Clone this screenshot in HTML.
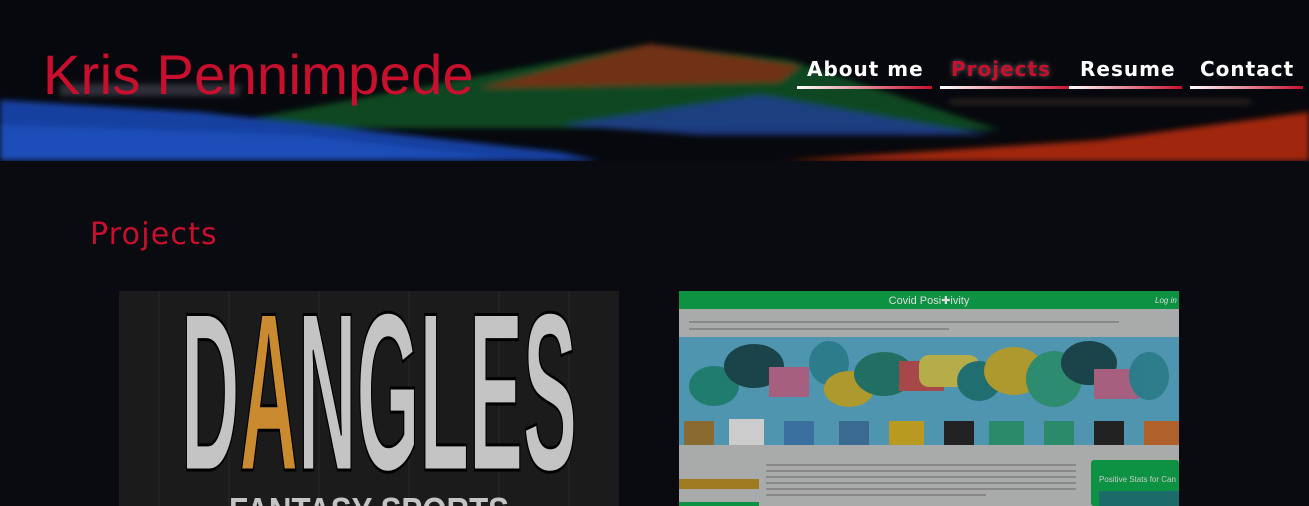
<!DOCTYPE html>
<html><head><meta charset="utf-8"><style>
*{margin:0;padding:0;box-sizing:border-box}
body{width:1309px;height:506px;overflow:hidden;background:#0a0b10;font-family:"DejaVu Sans","Liberation Sans",sans-serif;position:relative}
.hdr{position:absolute;left:0;top:0;width:1309px;height:161px;background:#07080d;overflow:hidden}
.name{position:absolute;left:43px;top:42px;font-family:"Liberation Sans",sans-serif;font-size:56px;color:#c8102e;letter-spacing:0.3px}
.nav a{position:absolute;top:57px;font-size:20px;font-weight:bold;color:#fff;letter-spacing:1px;text-decoration:none;white-space:nowrap}
.ul{position:absolute;top:86px;height:3px;background:linear-gradient(90deg,#fff,#c8102e)}
h2{position:absolute;left:90px;top:217px;font-size:30px;font-weight:normal;color:#c8102e;letter-spacing:1.2px}
</style></head><body>
<div class="hdr">
<svg width="1309" height="161" style="position:absolute;left:0;top:0">
<defs><filter id="b"><feGaussianBlur stdDeviation="3"/></filter></defs>
<g filter="url(#b)">
<polygon points="200,128 650,44 790,60 1000,130 700,128" fill="#156326" opacity="0.7"/>
<polygon points="480,88 650,44 800,66 780,82" fill="#8a2a18" opacity="0.8"/>
<polygon points="560,125 760,95 990,135 700,135" fill="#1f3e90" opacity="0.85"/>
<polygon points="0,100 200,112 560,152 600,161 0,161" fill="#163fa0"/>
<polygon points="0,125 300,135 500,158 0,158" fill="#2258c8" opacity="0.6"/>
<polygon points="780,161 1100,140 1309,112 1309,161" fill="#a0280e"/>
<rect x="950" y="100" width="300" height="4" fill="#5a5038" opacity="0.5"/>
<rect x="60" y="84" width="180" height="12" fill="#8a8aa0" opacity="0.3"/>
</g>
</svg>
<div class="name">Kris Pennimpede</div>
<div class="nav">
<a style="left:807px">About me</a>
<a style="left:951px;color:#c8102e;text-shadow:0 0 6px rgba(255,255,255,0.35)">Projects</a>
<a style="left:1080px">Resume</a>
<a style="left:1200px">Contact</a>
</div>
<div class="ul" style="left:797px;width:135px"></div>
<div class="ul" style="left:940px;width:132px"></div>
<div class="ul" style="left:1069px;width:113px"></div>
<div class="ul" style="left:1190px;width:113px"></div>
</div>
<h2>Projects</h2>
<svg width="500" height="215" style="position:absolute;left:119px;top:291px">
<rect width="500" height="215" fill="#1b1b1c"/>
<g stroke="#222223" stroke-width="2"><line x1="40" y1="0" x2="40" y2="215"/><line x1="110" y1="0" x2="110" y2="215"/><line x1="200" y1="0" x2="200" y2="215"/><line x1="290" y1="0" x2="290" y2="215"/><line x1="380" y1="0" x2="380" y2="215"/><line x1="450" y1="0" x2="450" y2="215"/></g>
<text x="62" y="179" font-family="Liberation Sans,sans-serif" font-weight="bold" font-size="226" textLength="396" lengthAdjust="spacingAndGlyphs" fill="#c4c4c4" stroke="#000" stroke-width="3">D<tspan fill="#c98a30">A</tspan>NGLES</text>
<text x="110" y="232" font-family="Liberation Sans,sans-serif" font-weight="bold" font-size="36" textLength="280" lengthAdjust="spacingAndGlyphs" fill="#c4c4c4">FANTASY SPORTS</text>
</svg>
<svg width="500" height="215" style="position:absolute;left:679px;top:291px">
<rect width="500" height="215" fill="#a9abab"/>
<rect width="500" height="18" fill="#0d9142"/>
<text x="250" y="13" text-anchor="middle" font-family="Liberation Sans,sans-serif" font-size="11" fill="#ddd">Covid Posi✚ivity</text>
<text x="476" y="12" font-family="Liberation Sans,sans-serif" font-size="8" font-style="italic" fill="#ddd">Log in</text>
<rect x="10" y="30" width="430" height="2" fill="#888"/><rect x="10" y="37" width="260" height="2" fill="#888"/>
<rect y="46" width="500" height="108" fill="#4f95b0"/>
<g opacity="0.9">
<ellipse cx="35" cy="95" rx="25" ry="20" fill="#1d7a6a"/><ellipse cx="75" cy="75" rx="30" ry="22" fill="#153b40"/>
<rect x="90" y="76" width="40" height="30" fill="#b05a7a"/><ellipse cx="150" cy="72" rx="20" ry="22" fill="#2a7a88"/>
<ellipse cx="170" cy="98" rx="25" ry="18" fill="#b89a20"/><ellipse cx="205" cy="83" rx="30" ry="22" fill="#1d6a5a"/>
<rect x="220" y="70" width="45" height="30" fill="#b04040"/><rect x="240" y="64" width="60" height="32" rx="10" fill="#c0b040"/>
<ellipse cx="300" cy="90" rx="22" ry="20" fill="#1d6a6a"/><ellipse cx="335" cy="80" rx="30" ry="24" fill="#b89a20"/>
<ellipse cx="375" cy="88" rx="28" ry="28" fill="#2a8a6a"/><ellipse cx="410" cy="72" rx="28" ry="22" fill="#153b40"/>
<rect x="415" y="78" width="45" height="30" fill="#b05a7a"/><ellipse cx="470" cy="85" rx="20" ry="24" fill="#2a7a88"/>
</g>
<g fill="#8a6a30"><rect x="5" y="130" width="30" height="24"/><rect x="50" y="128" width="35" height="26" fill="#ccc"/><rect x="105" y="130" width="30" height="24" fill="#3a70a0"/><rect x="160" y="130" width="30" height="24" fill="#3a6a90"/><rect x="210" y="130" width="35" height="24" fill="#b89a20"/><rect x="265" y="130" width="30" height="24" fill="#222"/><rect x="310" y="130" width="35" height="24" fill="#2a8a6a"/><rect x="365" y="130" width="30" height="24" fill="#2a8a6a"/><rect x="415" y="130" width="30" height="24" fill="#222"/><rect x="465" y="130" width="35" height="24" fill="#b0602a"/></g>
<rect x="0" y="188" width="80" height="10" fill="#a07a20"/><rect x="0" y="211" width="80" height="4" fill="#0d9142"/>
<g fill="#888"><rect x="87" y="173" width="310" height="2"/><rect x="87" y="179" width="310" height="2"/><rect x="87" y="185" width="310" height="2"/><rect x="87" y="191" width="310" height="2"/><rect x="87" y="197" width="310" height="2"/><rect x="87" y="203" width="220" height="2"/></g>
<rect x="412" y="169" width="88" height="46" rx="3" fill="#0d9142"/>
<text x="420" y="191" font-family="Liberation Sans,sans-serif" font-size="8" fill="#ccc">Positive Stats for Can</text>
<rect x="420" y="200" width="80" height="15" fill="#1d6a6a"/>
</svg>
</body></html>
